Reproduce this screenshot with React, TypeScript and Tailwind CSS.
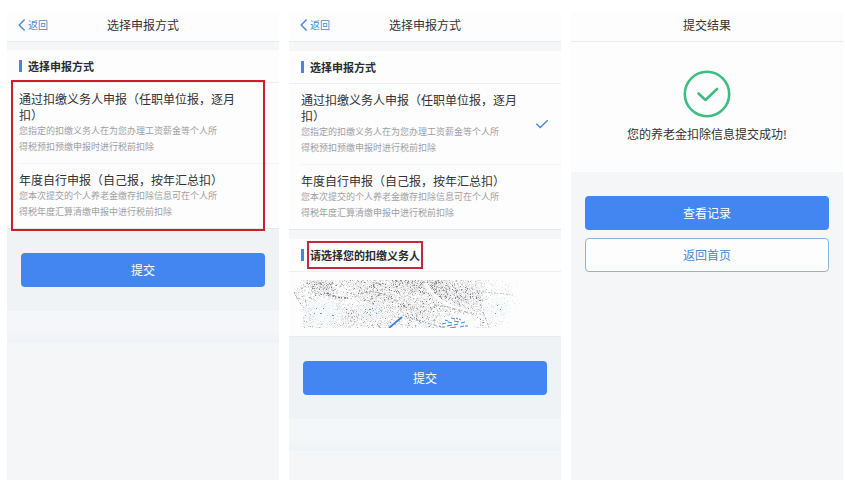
import { ReactNode, useState } from "react";

interface Method {
  id: string;
  title: string;
  desc: string;
}

const methods: Method[] = [
  {
    id: "agent",
    title: "通过扣缴义务人申报（任职单位报，逐月扣）",
    desc: "您指定的扣缴义务人在为您办理工资薪金等个人所得税预扣预缴申报时进行税前扣除",
  },
  {
    id: "self",
    title: "年度自行申报（自己报，按年汇总扣）",
    desc: "您本次提交的个人养老金缴存扣除信息可在个人所得税年度汇算清缴申报中进行税前扣除",
  },
];

// small seeded generator so the masked strip looks the same on every render
const makeRandom = (seed: number) => {
  let s = seed;
  return () => {
    s = (s * 16807) % 2147483647;
    return s / 2147483647;
  };
};

// soft round cluster, 1 in the middle and 0 at the edge
const blob = (x: number, y: number, cx: number, cy: number, rx: number, ry: number) =>
  Math.max(0, 1 - ((x - cx) / rx) ** 2 - ((y - cy) / ry) ** 2);

// how dense the speckles are around a point of the strip
const density = (x: number, y: number) => {
  const left = y < 14 ? 8 - y / 2 : y < 26 ? (y - 12) * 0.7 : 10;
  if (x < left || x > 226) return 0;
  let d = 0.3;
  d += 0.4 * blob(x, y, 28, 5, 16, 12);
  d += 0.25 * blob(x, y, 82, 10, 24, 16);
  d += 0.45 * blob(x, y, 122, 3, 26, 12);
  d += 0.35 * blob(x, y, 146, 8, 18, 14);
  d += 0.3 * blob(x, y, 168, 16, 26, 14);
  d += 0.25 * blob(x, y, 58, 36, 9, 14);
  d += 0.22 * blob(x, y, 124, 28, 24, 14);
  d -= 0.25 * blob(x, y, 30, 32, 22, 18);
  d -= 0.2 * blob(x, y, 60, 22, 16, 8);
  d -= 0.5 * blob(x, y, 166, 42, 22, 10);
  if (x > 190) d -= 0.16 + (x - 190) / 300;
  return d;
};

const scatter = (seed: number, amount: number, floor: number) => {
  const random = makeRandom(seed);
  let path = "";
  for (let y = 0; y < 48; y++) {
    for (let x = 0; x < 228; x++) {
      if (random() < (density(x, y) - floor) * amount) {
        path += `M${x} ${y}h1v1h-1z`;
      }
    }
  }
  return path;
};

const paleDots = scatter(1733, 1.2, 0);
const lightDots = scatter(50417, 0.6, 0.04);
const midDots = scatter(40123, 0.3, 0.12);
const darkDots = scatter(92033, 0.22, 0.28);

const MaskedStrip = () => (
  <svg viewBox="0 0 228 48" className="block w-[228px] h-12" aria-hidden="true">
    <ellipse cx="30" cy="32" rx="20" ry="12" fill="#f5fafd" />
    <ellipse cx="76" cy="32" rx="14" ry="10" fill="#f5fafd" />
    <ellipse cx="204" cy="28" rx="14" ry="10" fill="#f7fbfd" />
    <path d={paleDots} fill="#efeff0" />
    <path d={lightDots} fill="#dedee0" />
    <path d={midDots} fill="#b8b8bb" />
    <path d={darkDots} fill="#88888b" />
    <g fill="none" stroke="#fcfcfd" strokeWidth="3">
      <path d="M132 3C138 12 144 20 156 25S180 30 190 38" />
      <path d="M40 5C46 11 56 13 66 10" strokeWidth="2" />
      <path d="M192 14C188 22 196 34 194 47" strokeWidth="2" />
    </g>
    <g fill="none" stroke="#a4a4a8" strokeWidth="1" strokeDasharray="2 1 1 2">
      <path d="M34 13C40 17 48 18 56 18" stroke="#77777a" strokeWidth="1.6" />
      <path d="M62 17C76 8 90 12 104 21" />
      <path d="M1 12C4 20 8 24 11 28" />
      <path d="M100 21C112 19 122 10 130 4" stroke="#c4c4c8" />
      <path d="M142 25C156 26 170 32 184 34" />
      <path d="M190 32L196 47" stroke="#8fa6bd" />
      <path d="M112 36L144 46" stroke="#7f9fc4" />
      <path d="M140 41L150 28" stroke="#b4cbe0" />
      <path d="M178 8C188 14 204 12 220 15" stroke="#bcbcc0" />
    </g>
    <path d="M96 48L109 37" stroke="#3f7fd8" strokeWidth="1.8" />
    <g fill="none" stroke="#3d8ade" strokeWidth="1">
      <path d="M152 40l3 1M158 38l4 1M149 44l4 -1M155 42l4 1M161 41l5 1M168 43l4 -1M154 46l5 -1M161 45l4 -1M167 47l4 -1M163 38l2 1M149 47l3 0M157 48l6 -1M172 46l3 0M166 39l2 1M146 46l2 1" />
    </g>
    <path
      d="M30 28h1v1h-1zM27 33h2v1h-2zM39 35h2v1h-2zM21 33h1v1h-1zM23 28h1v1h-1zM76 29h2v1h-2zM74 32h1v1h-1zM83 33h1v1h-1zM204 25h1v1h-1zM207 29h1v1h-1zM202 33h1v1h-1zM126 41h1v1h-1z"
      fill="#5b9bdd"
    />
  </svg>
);

const Phone = ({ children }: { children: ReactNode }) => (
  <section className="flex flex-col flex-1 min-w-0 bg-[#f5f6f8]">
    {children}
  </section>
);

const Header = ({ title, back }: { title: string; back?: boolean }) => (
  <header className="relative flex items-center justify-center h-[31px] pb-0.5 bg-[#fdfdfe] border-b border-[#e9ebed]">
    {back && (
      <a
        href="#"
        className="absolute left-[11px] flex items-center gap-0.5 text-[10px] leading-4 text-[#4a88cf]"
      >
        <svg
          viewBox="0 0 8 12"
          className="w-2 h-3"
          fill="none"
          stroke="currentColor"
          strokeWidth="1.4"
        >
          <path d="M6.6 0.5L1.2 6L6.6 11.5" />
        </svg>
        返回
      </a>
    )}
    <h1 className="text-xs leading-4 text-[#333333]">{title}</h1>
  </header>
);

const SectionTitle = ({
  title,
  marked,
}: {
  title: string;
  marked?: boolean;
}) => (
  <div className="flex items-center gap-1.5 h-[33px] px-3 bg-[#fdfdfe] border-b border-[#eceef0]">
    <span className="w-[3px] h-3 bg-[#4285f0]"></span>
    <h2 className="relative text-[11px] leading-4 font-bold text-[#2b2b2b]">
      {title}
      {marked && (
        <span className="absolute -inset-x-[3px] -inset-y-1.5 border-2 border-[#c3283c]"></span>
      )}
    </h2>
  </div>
);

const PrimaryButton = ({ children }: { children: ReactNode }) => (
  <button
    type="button"
    className="w-full h-[34px] rounded-sm bg-[#4486f1] text-xs text-white"
  >
    {children}
  </button>
);

const SubmitArea = () => (
  <>
    <div className="px-3.5 py-6 bg-[#eff3f6]">
      <PrimaryButton>提交</PrimaryButton>
    </div>
    <div className="h-3 mt-5 bg-linear-to-b from-[#f5f6f8] to-[#eef3f7]"></div>
  </>
);

interface MethodListProps {
  name: string;
  initial: string;
  marked?: boolean;
}

const MethodList = ({ name, initial, marked }: MethodListProps) => {
  const [selected, setSelected] = useState(initial);

  return (
    <div className="relative bg-[#fdfdfe] border-b border-[#e4e7ea]">
      {methods.map((method, index) => (
        <div key={method.id} className="pl-3">
          <label
            className={
              index === 0
                ? "flex items-center justify-between py-2 pr-3 border-b border-[#f2f3f5]"
                : "flex items-center justify-between py-2 pr-3"
            }
          >
            <input
              type="radio"
              name={name}
              value={method.id}
              checked={selected === method.id}
              onChange={() => setSelected(method.id)}
              className="sr-only"
            />
            <span className="flex flex-col">
              <span className="max-w-[220px] text-xs leading-4 text-[#333333]">
                {method.title}
              </span>
              <span className="max-w-[204px] text-[9px] leading-4 text-[#a0a0a3]">
                {method.desc}
              </span>
            </span>
            {selected === method.id && (
              <svg
                viewBox="0 0 14 10"
                className="w-3.5 h-2.5 shrink-0"
                fill="none"
                stroke="#4a88d8"
                strokeWidth="1.4"
              >
                <path d="M1.4 4.8L5.2 8.6L12.8 1.2" />
              </svg>
            )}
          </label>
        </div>
      ))}
      {marked && (
        <span className="absolute left-1 right-3.5 -inset-y-[3px] border-2 border-[#c8202f] pointer-events-none"></span>
      )}
    </div>
  );
};

const App = () => {
  return (
    <main
      lang="zh-CN"
      className="flex gap-2.5 min-h-screen pt-[11px] pl-[7px] pr-0.5 bg-white font-['Noto_Sans_CJK_SC',sans-serif]"
    >
      <Phone>
        <Header title="选择申报方式" back />
        <div className="pt-2">
          <SectionTitle title="选择申报方式" />
          <MethodList name="method-first" initial="" marked />
        </div>
        <SubmitArea />
      </Phone>

      <Phone>
        <Header title="选择申报方式" back />
        <div className="pt-[9px]">
          <SectionTitle title="选择申报方式" />
          <MethodList name="method-second" initial="agent" />
        </div>
        <div className="pt-[9px]">
          <SectionTitle title="请选择您的扣缴义务人" marked />
          <div className="px-1 py-2 bg-[#fdfdfe] border-b border-[#e9ebed]">
            <MaskedStrip />
          </div>
        </div>
        <SubmitArea />
      </Phone>

      <Phone>
        <Header title="提交结果" />
        <div className="flex flex-col items-center gap-2 pt-7 pb-[30px] bg-[#fdfdfe]">
          <svg
            viewBox="0 0 48 48"
            className="w-12 h-12"
            fill="none"
            stroke="#3dbd82"
            strokeWidth="2.6"
            strokeLinecap="round"
            strokeLinejoin="round"
          >
            <circle cx="24" cy="24" r="22.2" />
            <path d="M15.5 23.5L22.5 30L34 19" />
          </svg>
          <p className="text-xs leading-4 text-[#333333]">
            您的养老金扣除信息提交成功!
          </p>
        </div>
        <div className="flex flex-col gap-2 px-3.5 pt-6">
          <PrimaryButton>查看记录</PrimaryButton>
          <button
            type="button"
            className="w-full h-[34px] rounded-sm border border-[#8db4dc] bg-[#fdfdfe] text-xs text-[#4a88cf]"
          >
            返回首页
          </button>
        </div>
      </Phone>
    </main>
  );
};

export default App;
